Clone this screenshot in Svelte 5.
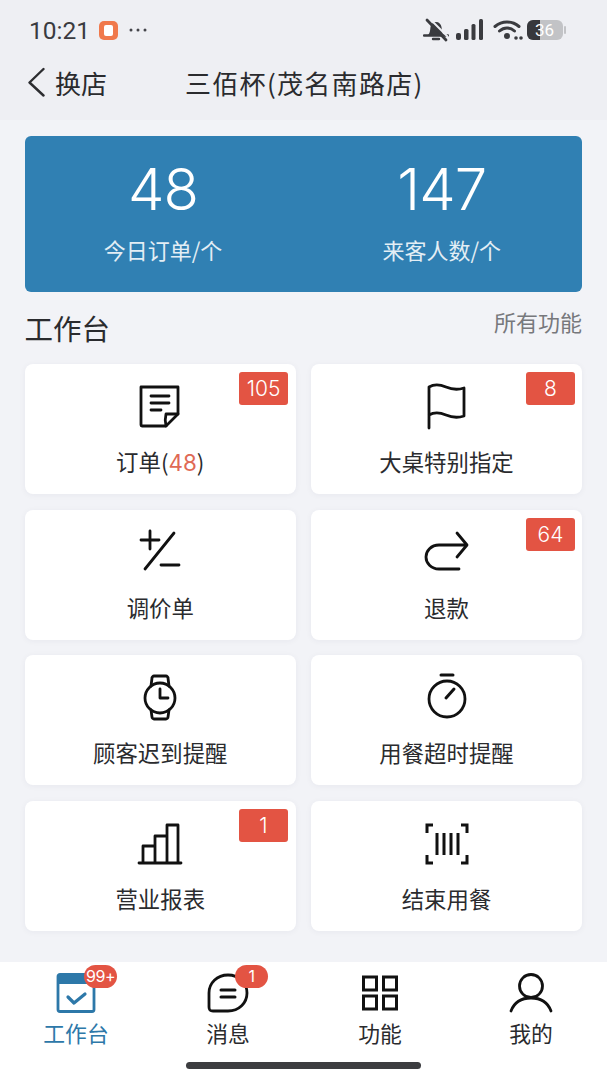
<script>
  const cards = [
    { label: '订单', count: '48', badge: '105', icon: 'note' },
    { label: '大桌特别指定', badge: '8', icon: 'flag' },
    { label: '调价单', icon: 'plusminus' },
    { label: '退款', badge: '64', icon: 'redo' },
    { label: '顾客迟到提醒', icon: 'watch' },
    { label: '用餐超时提醒', icon: 'timer' },
    { label: '营业报表', badge: '1', icon: 'bars' },
    { label: '结束用餐', icon: 'barcode' }
  ];
</script>

<div class="page">
  <header class="top">
    <div class="status">
      <span class="time">10:21</span>
      <span class="app-dot"><i></i></span>
      <svg class="more" width="18" height="4" viewBox="0 0 18 4" fill="#44454a">
        <circle cx="2" cy="2" r="1.500" />
        <circle cx="9" cy="2" r="1.500" />
        <circle cx="16" cy="2" r="1.500" />
      </svg>
      <span class="spacer"></span>
      <svg width="26" height="24" viewBox="0 0 26 24">
        <path d="M5 17c2-2 2-4 2.500-8 .5-3 2.500-5 5.500-5s5 2 5.500 5c.5 4 .5 6 2.500 8z" fill="#3a3b3f" />
        <path d="M1 17.500h24M10 21h6" stroke="#3a3b3f" stroke-width="2.400" stroke-linecap="round" />
        <path d="M7 1l18 18" stroke="#eeeff3" stroke-width="2" />
        <path d="M4 2l19 20" stroke="#3a3b3f" stroke-width="2.800" stroke-linecap="round" />
      </svg>
      <svg class="signal" width="30" height="22" viewBox="0 0 30 22">
        <rect x="1" y="14" width="5" height="7" rx="2" fill="#3a3b3f" />
        <rect x="9" y="10" width="4.500" height="11" rx="1.500" fill="#3a3b3f" />
        <rect x="16.500" y="5" width="4" height="16" rx="1.500" fill="#3a3b3f" />
        <rect x="24" y="0" width="4" height="21" rx="1.500" fill="#3a3b3f" />
      </svg>
      <svg class="wifi" width="30" height="22" viewBox="0 0 30 22">
        <path d="M2 7.500c7-6 17-6 24 0M6.500 12c4.500-4 10.500-4 15 0" fill="none" stroke="#3a3b3f" stroke-width="3" stroke-linecap="round" />
        <circle cx="14" cy="17" r="3" fill="#3a3b3f" />
        <circle cx="23" cy="19" r="1.800" fill="#3a3b3f" />
        <circle cx="28" cy="19" r="1.800" fill="#3a3b3f" />
      </svg>
      <div class="battery"><span class="level"></span><span class="pct">36</span></div>
      <span class="cap"></span>
    </div>
    <nav class="bar">
      <svg width="20" height="30" viewBox="0 0 20 30">
        <path d="M17.500 2L3.500 15.500 17.500 28.500" fill="none" stroke="#2c2d30" stroke-width="2.400" stroke-linecap="round" stroke-linejoin="round" />
      </svg>
      <span class="switch">换店</span>
      <span class="store">三佰杯(茂名南路店)</span>
    </nav>
  </header>

  <main>
    <section class="stats">
      <div class="stat"><strong>48</strong><span>今日订单/个</span></div>
      <div class="stat"><strong>147</strong><span>来客人数/个</span></div>
    </section>

    <div class="heading">
      <h2>工作台</h2>
      <span>所有功能</span>
    </div>

    <div class="grid">
      {#each cards as card}
        <div class="card">
          {#if card.badge}<span class="badge">{card.badge}</span>{/if}
          <svg class="icon" width="48" height="48" viewBox="0 0 48 48" fill="none" stroke="#111" stroke-width="2.800" stroke-linecap="round" stroke-linejoin="round">
            {#if card.icon === 'note'}
              <path d="M5 5h37v27L30 44H6a1 1 0 0 1-1-1z" />
              <path d="M30 44c-1-4-1-8 0-12h12M15 14h18M15 21h18M15 28h10" />
            {:else if card.icon === 'flag'}
              <path d="M6 46V5c5-3 10-3 17 0s12 3 18 1v28c-6 2-11 2-18-1S11 30 6 33" />
            {:else if card.icon === 'plusminus'}
              <path d="M5 12h18M14 3v18M38 5L9 41M25 37h18" />
            {:else if card.icon === 'redo'}
              <path d="M44 17H16C8 17 3 23 3 29s5 12 13 12h20M34 5l10 12-10 12" />
            {:else if card.icon === 'watch'}
              <circle cx="24" cy="25" r="15" />
              <path d="M15 13l1-8c0-1 1-2 2-2h12c1 0 2 1 2 2l1 8M15 37l1 7c0 1 1 2 2 2h12c1 0 2-1 2-2l1-7M24 16v9h8" />
            {:else if card.icon === 'timer'}
              <circle cx="24" cy="26" r="18" />
              <path d="M18 2h12M23 25l8-9" stroke-width="3" />
            {:else if card.icon === 'bars'}
              <path d="M3 44h42M7 44V27h12M19 44V17h12M31 44V6h11v38" />
            {:else}
              <path d="M10 6H4v8M38 6h6v8M10 44H4v-8M38 44h6v-8M14 14v22M21 14v22M28 14v22M35 14v22" stroke-width="3" stroke-linecap="butt" stroke-linejoin="miter" />
            {/if}
          </svg>
          <p>{card.label}{#if card.count}(<em>{card.count}</em>){/if}</p>
        </div>
      {/each}
    </div>
  </main>

  <footer class="tabs">
    <div class="tab active">
      <div class="tab-icon">
        <svg width="40" height="40" viewBox="0 0 40 40">
          <rect x="2" y="1.500" width="36" height="37" rx="2" fill="none" stroke="#2d78a9" stroke-width="2.800" />
          <path d="M2 1h36v10H2z" fill="#2d78a9" />
          <path d="M12 24l6 6 11-9" fill="none" stroke="#2d78a9" stroke-width="3.200" stroke-linecap="round" stroke-linejoin="round" />
        </svg>
        <span class="dot">99+</span>
      </div>
      <span>工作台</span>
    </div>
    <div class="tab">
      <div class="tab-icon">
        <svg width="42" height="40" viewBox="0 0 42 40" fill="none" stroke="#111" stroke-width="2.800" stroke-linecap="round">
          <path d="M21 2C10 2 2 10 2 20v14c0 3 1 4 4 4h15c11 0 19-8 19-18S32 2 21 2z" />
          <path d="M14 17h14M14 24h14" stroke-width="3" />
        </svg>
        <span class="dot">1</span>
      </div>
      <span>消息</span>
    </div>
    <div class="tab">
      <div class="tab-icon">
        <svg width="36" height="40" viewBox="0 0 36 40" fill="none" stroke="#111" stroke-width="3">
          <rect x="1.500" y="4" width="13" height="13" />
          <rect x="21.500" y="4" width="13" height="13" />
          <rect x="1.500" y="23" width="13" height="13" />
          <rect x="21.500" y="23" width="13" height="13" />
        </svg>
      </div>
      <span>功能</span>
    </div>
    <div class="tab">
      <div class="tab-icon">
        <svg width="44" height="40" viewBox="0 0 44 40" fill="none" stroke="#111" stroke-width="2.800" stroke-linecap="round">
          <circle cx="22" cy="13" r="11.500" />
          <path d="M2 38c3-8 10-13 20-13s17 5 20 13" />
        </svg>
      </div>
      <span>我的</span>
    </div>
  </footer>
  <div class="home"><i></i></div>
</div>

<style>
  :global(body) {
    font-family: "Noto Sans CJK SC", Roboto, sans-serif;
    background-color: #f2f3f7;
    margin: 0;
  }

  .page {
    width: 607px;
    height: 1080px;
    display: flex;
    flex-direction: column;
    overflow: hidden;
    color: #2a2b2e;
  }

  .top {
    height: 120px;
    background-color: #eeeff3;
    flex-shrink: 0;
  }

  .status {
    height: 60px;
    padding: 0 41px 0 29px;
    display: flex;
    align-items: center;
    box-sizing: border-box;
  }

  .time {
    font-family: Roboto, sans-serif;
    font-size: 24.500px;
    margin-top: 1px;
    color: #3a3b3f;
  }

  .app-dot {
    width: 19px;
    height: 19px;
    margin-left: 9px;
    border-radius: 5px;
    background-color: #f0794c;
    display: flex;
    align-items: center;
    justify-content: center;
  }

  .app-dot i {
    width: 9px;
    height: 11px;
    border-radius: 2px;
    background-color: #fff;
  }

  .more {
    margin-left: 11px;
  }

  .spacer {
    flex: 1;
  }

  .signal {
    margin-left: 6px;
  }

  .wifi {
    margin-left: 8px;
  }

  .battery {
    width: 36px;
    height: 20px;
    margin-left: 4px;
    border-radius: 6px;
    overflow: hidden;
    position: relative;
    background-color: #c2c3c6;
  }

  .level {
    display: block;
    width: 13px;
    height: 100%;
    background-color: #37383c;
  }

  .pct {
    position: absolute;
    left: 8px;
    top: 0;
    font-family: Roboto, sans-serif;
    font-size: 17px;
    line-height: 20px;
    color: #fff;
  }

  .cap {
    width: 2px;
    height: 8px;
    margin-left: 1px;
    border-radius: 1px;
    background-color: #c2c3c6;
  }

  .bar {
    height: 44px;
    padding-left: 26px;
    display: flex;
    align-items: center;
    font-size: 26px;
  }

  .switch {
    margin-left: 9px;
  }

  .store {
    margin-left: 78px;
    letter-spacing: 1.300px;
  }

  main {
    flex: 1;
    padding: 16px 25px 0 24.500px;
  }

  .stats {
    height: 156px;
    border-radius: 6px;
    background-color: #3080b3;
    display: grid;
    grid-template-columns: 277px 1fr;
    color: #fff;
  }

  .stat {
    display: flex;
    flex-direction: column;
    align-items: center;
  }

  .stat strong {
    font-family: Inter, sans-serif;
    font-weight: 350;
    font-size: 58px;
    letter-spacing: -1px;
    line-height: 70px;
    margin-top: 18px;
  }

  .stat span {
    font-size: 22px;
    line-height: 30px;
    margin-top: 10px;
    color: #e3eef5;
  }

  .heading {
    height: 72px;
    display: flex;
    justify-content: space-between;
    align-items: center;
  }

  h2 {
    margin: -2px 0 0;
    font-size: 28.500px;
    font-weight: 400;
  }

  .heading span {
    font-size: 22px;
    color: #77787c;
    margin-top: -15px;
  }

  .grid {
    display: grid;
    grid-template-columns: 271.500px 271px;
    grid-auto-rows: 130px;
    column-gap: 15px;
    row-gap: 15.500px;
  }

  .card {
    position: relative;
    display: flex;
    flex-direction: column;
    align-items: center;
    border-radius: 8px;
    background-color: #fff;
    box-shadow: 0 1px 6px rgba(30, 40, 70, 0.05);
  }

  .badge {
    position: absolute;
    right: 8px;
    top: 8px;
    width: 49px;
    height: 33px;
    border-radius: 3px;
    background-color: #e35443;
    color: #fff;
    font-family: Inter, sans-serif;
    font-weight: 300;
    font-size: 21px;
    line-height: 33px;
    text-align: center;
  }

  .card:nth-child(even) .badge {
    right: 7px;
  }

  .icon {
    margin-top: 18px;
  }

  .card p {
    margin: 16px 0 0;
    font-size: 22.400px;
    line-height: 30px;
  }

  .card em {
    font-family: Inter, sans-serif;
    font-style: normal;
    color: #df6a55;
  }

  .tabs {
    height: 86px;
    background-color: #fff;
    display: grid;
    grid-template-columns: 152px 152px 152px 150px;
    flex-shrink: 0;
  }

  .tab {
    display: flex;
    flex-direction: column;
    align-items: center;
    font-size: 21.800px;
    line-height: 30px;
  }

  .tab-icon {
    position: relative;
    height: 40px;
    margin-top: 11px;
    margin-bottom: 5px;
  }

  .tab.active {
    color: #2d78a9;
  }

  .dot {
    position: absolute;
    left: 28px;
    top: -8px;
    width: 33px;
    height: 23px;
    border-radius: 12px;
    background-color: #e35443;
    color: #fff;
    font-family: Inter, sans-serif;
    font-size: 16px;
    letter-spacing: -0.5px;
    line-height: 23px;
    text-align: center;
  }

  .home {
    height: 32px;
    background-color: #fff;
    flex-shrink: 0;
    display: flex;
    justify-content: center;
  }

  .home i {
    width: 235px;
    height: 7px;
    margin-top: 14px;
    border-radius: 4px;
    background-color: #3c3d40;
  }
</style>
